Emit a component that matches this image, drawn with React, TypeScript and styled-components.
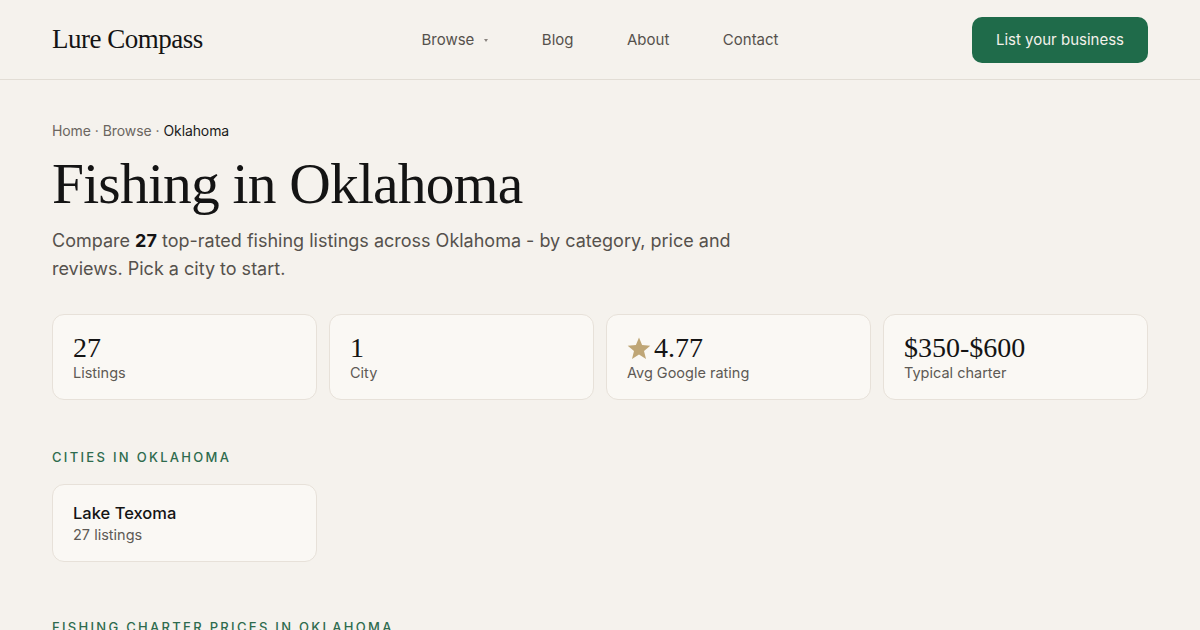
import React from 'react';
import styled, { createGlobalStyle } from 'styled-components';

const GlobalStyle = createGlobalStyle`
  html, body {
    margin: 0;
    padding: 0;
    background: #f5f2ed;
  }

  body {
    font-family: Inter, "Noto Sans", sans-serif;
    color: #1a1a1a;
    -webkit-font-smoothing: antialiased;
  }
`;

const serif = `"Liberation Serif", "DejaVu Serif", serif`;

const Header = styled.header`
  height: 79px;
  border-bottom: 1px solid #e2ddd5;
`;

const HeaderInner = styled.div`
  width: 1096px;
  margin: 0 auto;
  height: 100%;
  display: grid;
  grid-template-columns: 1fr auto 1fr;
  align-items: center;
`;

const Logo = styled.a`
  font-family: ${serif};
  font-size: 27px;
  letter-spacing: -0.5px;
  color: #141414;
  text-decoration: none;
`;

const Nav = styled.nav`
  display: flex;
  align-items: center;
  gap: 53.5px;
`;

const NavLink = styled.a`
  display: flex;
  align-items: center;
  gap: 10px;
  font-size: 15px;
  color: #55514c;
  text-decoration: none;
`;

const Caret = styled.span`
  display: inline-block;
  width: 0;
  height: 0;
  border-left: 2.5px solid transparent;
  border-right: 2.5px solid transparent;
  border-top: 3px solid #8a8580;
  margin-top: 2px;
`;

const CtaButton = styled.a`
  justify-self: end;
  background: #1f6b4a;
  color: #f4f1ea;
  font-size: 15px;
  height: 46px;
  padding: 0 24px;
  border-radius: 10px;
  display: flex;
  align-items: center;
  text-decoration: none;
`;

const Main = styled.main`
  width: 1096px;
  margin: 0 auto;
  padding-top: 42px;
`;

const Crumbs = styled.div`
  font-size: 14px;
  color: #6b6660;
  display: flex;
  gap: 4px;
  letter-spacing: -0.1px;
`;

const CrumbCurrent = styled.span`
  color: #1a1a1a;
`;

const Title = styled.h1`
  font-family: ${serif};
  font-weight: 400;
  font-size: 57.5px;
  letter-spacing: -0.8px;
  line-height: 1;
  margin: 16px 0 0;
  color: #141414;
`;

const Lead = styled.p`
  font-size: 18px;
  line-height: 28px;
  color: #55514c;
  width: 700px;
  margin: 14px 0 0;

  strong {
    color: #141414;
    font-weight: 700;
  }
`;

const StatGrid = styled.div`
  display: grid;
  grid-template-columns: repeat(4, 1fr);
  gap: 12px;
  margin-top: 31px;
`;

const Card = styled.div`
  background: #faf8f4;
  border: 1px solid #e7e1d9;
  border-radius: 12px;
  box-sizing: border-box;
`;

const StatCard = styled(Card)`
  height: 86px;
  padding: 19px 20px 0;
`;

const StatValue = styled.div`
  font-family: ${serif};
  font-size: 28px;
  line-height: 28px;
  color: #141414;
  display: flex;
  align-items: center;
  gap: 3px;
`;

const StatLabel = styled.div`
  font-size: 14.5px;
  color: #5e5a55;
  margin-top: 2px;
`;

const SectionLabel = styled.h2`
  font-size: 13px;
  font-weight: 500;
  letter-spacing: 2.3px;
  text-transform: uppercase;
  color: #2e6b4e;
  margin: 0;
`;

const Section = styled.section<{ $top: number }>`
  margin-top: ${p => p.$top}px;
`;

const CityGrid = styled.div`
  display: grid;
  grid-template-columns: repeat(4, 1fr);
  gap: 12px;
  margin-top: 19px;
`;

const CityCard = styled(Card)`
  height: 78px;
  padding: 18px 20px 0;
`;

const CityName = styled.div`
  font-size: 16.5px;
  font-weight: 500;
  color: #141414;
`;

const CityMeta = styled.div`
  font-size: 14.5px;
  color: #5e5a55;
  margin-top: 3px;
`;

const Star = () => (
  <svg width="24" height="24" viewBox="0 0 24 24" aria-hidden="true">
    <path
      d="M12 1.5l3.1 7.6 8.2.6-6.3 5.3 2 8-7-4.4-7 4.4 2-8L.7 9.7l8.2-.6z"
      fill="#bfa676"
    />
  </svg>
);

const stats = [
  { value: '27', label: 'Listings' },
  { value: '1', label: 'City' },
  { value: '4.77', label: 'Avg Google rating', star: true },
  { value: '$350-$600', label: 'Typical charter' },
];

export default function App() {
  return (
    <>
      <GlobalStyle />
      <Header>
        <HeaderInner>
          <Logo href="#">Lure Compass</Logo>
          <Nav>
            <NavLink href="#">
              Browse
              <Caret />
            </NavLink>
            <NavLink href="#">Blog</NavLink>
            <NavLink href="#">About</NavLink>
            <NavLink href="#">Contact</NavLink>
          </Nav>
          <CtaButton href="#">List your business</CtaButton>
        </HeaderInner>
      </Header>

      <Main>
        <Crumbs>
          <span>Home</span>
          <span>·</span>
          <span>Browse</span>
          <span>·</span>
          <CrumbCurrent>Oklahoma</CrumbCurrent>
        </Crumbs>
        <Title>Fishing in Oklahoma</Title>
        <Lead>
          Compare <strong>27</strong> top-rated fishing listings across Oklahoma - by category, price and
          reviews. Pick a city to start.
        </Lead>

        <StatGrid>
          {stats.map(s => (
            <StatCard key={s.label}>
              <StatValue>
                {s.star && <Star />}
                {s.value}
              </StatValue>
              <StatLabel>{s.label}</StatLabel>
            </StatCard>
          ))}
        </StatGrid>

        <Section $top={49}>
          <SectionLabel>Cities in Oklahoma</SectionLabel>
          <CityGrid>
            <CityCard>
              <CityName>Lake Texoma</CityName>
              <CityMeta>27 listings</CityMeta>
            </CityCard>
          </CityGrid>
        </Section>

        <Section $top={57}>
          <SectionLabel>Fishing charter prices in Oklahoma</SectionLabel>
        </Section>
      </Main>
    </>
  );
}
